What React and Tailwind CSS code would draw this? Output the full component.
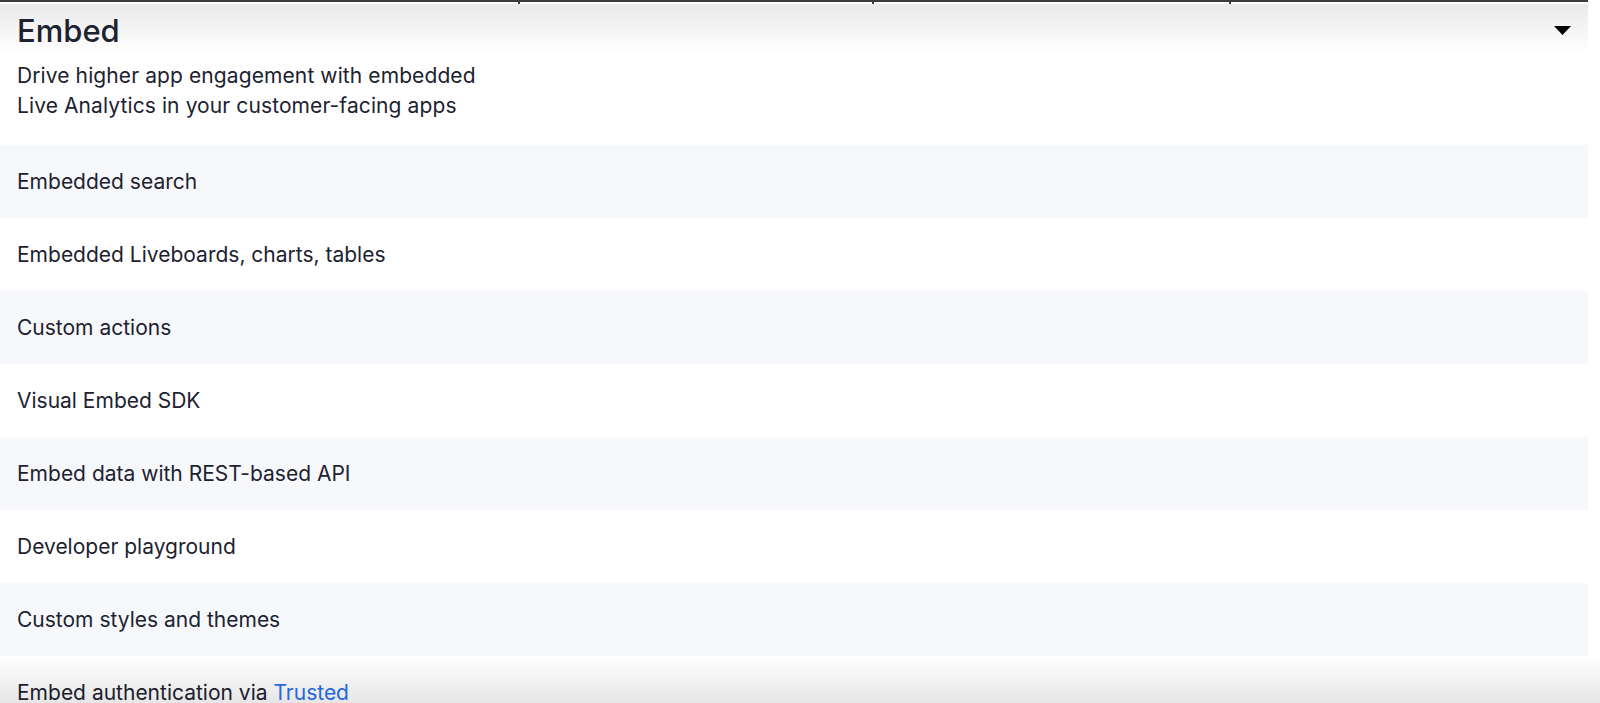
import React from 'react';

const features = [
  'Embedded search',
  'Embedded Liveboards, charts, tables',
  'Custom actions',
  'Visual Embed SDK',
  'Embed data with REST-based API',
  'Developer playground',
  'Custom styles and themes',
];

export default function App() {
  return (
    <div className="relative h-[703px] overflow-hidden bg-white text-[#1d2230]" style={{ fontFamily: 'Inter, "Noto Sans", sans-serif' }}>
      <div className="w-[1588px]">
        {/* Table header edge above */}
        <div className="flex h-[4px] border-t-2 border-[#3c3c3c]">
          <div className="w-[520px] border-r-2 border-[#3c3c3c]" />
          <div className="w-[354px] border-r-2 border-[#3c3c3c]" />
          <div className="w-[357px] border-r-2 border-[#3c3c3c]" />
          <div className="flex-1" />
        </div>

        {/* Section header */}
        <div className="bg-[linear-gradient(to_bottom,#eaeaea,#ffffff_50px)] px-[17px] pt-[9px] pb-[24px]">
          <div className="flex items-center justify-between">
            <h2 className="text-[31px] leading-[36px] font-medium">Embed</h2>
            <svg width="17" height="9" viewBox="0 0 17 9" className="mt-[-2px]">
              <path d="M0 0h17L8.5 9z" fill="#000" />
            </svg>
          </div>
          <p className="mt-[12px] text-[21px] leading-[30px] tracking-[0.1px]">
            Drive higher app engagement with embedded
            <br />
            Live Analytics in your customer-facing apps
          </p>
        </div>

        {/* Feature rows */}
        <div className="flex flex-col text-[21px]">
          {features.map((f, i) => (
            <div key={f} className={`flex h-[73px] items-center px-[17px] ${i % 2 === 0 ? 'bg-[#f7f8fc]' : 'bg-white'}`}>
              {f}
            </div>
          ))}
          <div className="flex h-[73px] items-center bg-white px-[17px]">
            Embed authentication via&nbsp;<a className="text-[#2770ef]">Trusted</a>
          </div>
        </div>
      </div>

      {/* Bottom fade */}
      <div className="pointer-events-none absolute inset-x-0 bottom-0 h-[46px] bg-gradient-to-b from-black/0 to-black/10" />
    </div>
  );
}
